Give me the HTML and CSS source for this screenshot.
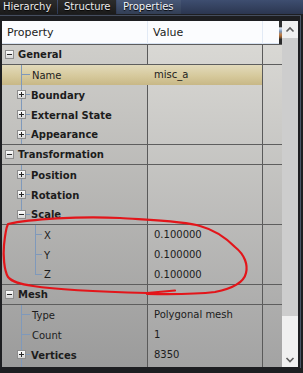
FILE: index.html
```html
<!DOCTYPE html>
<html>
<head>
    <meta charset="UTF-8">
    <title>Properties</title>
    <link rel="stylesheet" href="styles.css">
</head>
<body>
    <div class="tabs">
        <div class="tab t1">Hierarchy</div>
        <div class="tab t2">Structure</div>
        <div class="tab t3 active">Properties</div>
    </div>

    <div class="frame">
        <div class="grid">
            <div class="head">
                <div class="prop">Property</div>
                <div class="val">Value</div>
                <div class="rest"><span class="thumbimg"></span></div>
            </div>
            <div class="body">
                <div class="row line">
                    <div class="prop"><span class="tg"></span><b class="cat">General</b></div>
                    <div class="val"></div><div class="rest"></div>
                </div>
                <div class="row sel">
                    <div class="prop"><span class="br"></span><span class="leaf">Name</span></div>
                    <div class="val">misc_a</div><div class="rest"></div>
                </div>
                <div class="row">
                    <div class="prop"><span class="br"><span class="tg plus"></span></span><b>Boundary</b></div>
                    <div class="val"></div><div class="rest"></div>
                </div>
                <div class="row">
                    <div class="prop"><span class="br"><span class="tg plus"></span></span><b>External State</b></div>
                    <div class="val"></div><div class="rest"></div>
                </div>
                <div class="row line">
                    <div class="prop"><span class="br"><span class="tg plus"></span></span><b>Appearance</b></div>
                    <div class="val"></div><div class="rest"></div>
                </div>
                <div class="row line">
                    <div class="prop"><span class="tg"></span><b class="cat">Transformation</b></div>
                    <div class="val"></div><div class="rest"></div>
                </div>
                <div class="row">
                    <div class="prop"><span class="br"><span class="tg plus"></span></span><b>Position</b></div>
                    <div class="val"></div><div class="rest"></div>
                </div>
                <div class="row">
                    <div class="prop"><span class="br"><span class="tg plus"></span></span><b>Rotation</b></div>
                    <div class="val"></div><div class="rest"></div>
                </div>
                <div class="row line">
                    <div class="prop"><span class="br last"><span class="tg"></span></span><b>Scale</b></div>
                    <div class="val"></div><div class="rest"></div>
                </div>
                <div class="row">
                    <div class="prop"><span class="br l2"></span><span class="leaf">X</span></div>
                    <div class="val">0.100000</div><div class="rest"></div>
                </div>
                <div class="row">
                    <div class="prop"><span class="br l2"></span><span class="leaf">Y</span></div>
                    <div class="val">0.100000</div><div class="rest"></div>
                </div>
                <div class="row line">
                    <div class="prop"><span class="br l2 last"></span><span class="leaf">Z</span></div>
                    <div class="val">0.100000</div><div class="rest"></div>
                </div>
                <div class="row line">
                    <div class="prop"><span class="tg"></span><b class="cat">Mesh</b></div>
                    <div class="val"></div><div class="rest"></div>
                </div>
                <div class="row">
                    <div class="prop"><span class="br"></span><span class="leaf">Type</span></div>
                    <div class="val">Polygonal mesh</div><div class="rest"></div>
                </div>
                <div class="row">
                    <div class="prop"><span class="br"></span><span class="leaf">Count</span></div>
                    <div class="val">1</div><div class="rest"></div>
                </div>
                <div class="row">
                    <div class="prop"><span class="br"><span class="tg plus"></span></span><b>Vertices</b></div>
                    <div class="val">8350</div><div class="rest"></div>
                </div>
                <!-- next row is scrolled out of view, only its tree line shows -->
                <div class="row">
                    <div class="prop"><span class="br"></span></div>
                    <div class="val"></div><div class="rest"></div>
                </div>
            </div>
        </div>

        <div class="scroll">
            <div class="sbtn">
                <svg width="16" height="16" viewBox="0 0 16 16"><polyline points="4.5,10.5 8,7 11.5,10.5" fill="none" stroke="#5c5c5c" stroke-width="1.6"/></svg>
            </div>
            <div class="sthumb"></div>
            <div class="strack"></div>
            <div class="sbtn">
                <svg width="16" height="16" viewBox="0 0 16 16"><polyline points="4.5,7 8,10.5 11.5,7" fill="none" stroke="#5c5c5c" stroke-width="1.6"/></svg>
            </div>
        </div>
    </div>

    <!-- red pen mark drawn over the panel -->
    <svg class="mark" width="303" height="373" viewBox="0 0 303 373">
        <path d="M175 290.5 L147 293 C110 292 60 290 33 286 C20 284 12 282 8 277 C4 270 3 255 4 245 C5 235 6 228 8 224 C30 219 80 216 120 218 C150 220 185 221 200 226 C215 230 225 237 235 247 C245 255 248 265 246 273 C244 282 235 288 215 292 C190 295 165 294 147 294" fill="none" stroke="#e3151a" stroke-width="2.2" stroke-linecap="round" stroke-linejoin="round"/>
    </svg>
</body>
</html>
```

FILE: styles.css
```css
body {
    margin: 0;
    width: 303px;
    height: 373px;
    overflow: hidden;
    position: relative;
    background: #1d1e21;
    font-family: "DejaVu Sans", Verdana, sans-serif;
    font-size: 10px;
    color: #1c1c1c;
}
.tabs {
    display: flex;
    height: 14px;
    background: linear-gradient(#3e4e70, #2b3650);
}
.tab {
    box-sizing: border-box;
    height: 14px;
    line-height: 14px;
    color: #ececec;
    text-shadow: 0 1px 1px #000;
    background: linear-gradient(#2c2c2c, #1b1b1b);
    margin-right: 1px;
}
.t1 {
    width: 57px;
    padding-left: 3px;
}
.t2 {
    width: 58px;
    padding-left: 6px;
}
.t3 {
    width: 64px;
    padding-left: 6px;
}
.tab.active {
    background: linear-gradient(#485877, #323e55);
    color: #f2f4f8;
}
.frame {
    display: flex;
    width: 301px;
    box-sizing: border-box;
    margin-top: 1px;
    padding: 5px 2px 0 2px;
    border-top: 1px solid #444d5e;
    border-right: 1px solid #4a5466;
    height: 353px;
}
.grid {
    width: 280px;
    height: 346px;
    overflow: hidden;
    background: #c8c8c8;
}
.head {
    display: grid;
    grid-template-columns: 146px 115px 19px;
    height: 24px;
    box-sizing: border-box;
    background: #fbfcfe;
    border-bottom: 1px solid #5c5c5c;
    box-shadow: inset 0 -1px 0 #d8e3f2;
    font-size: 11px;
    line-height: 23px;
}
.head .prop {
    padding-left: 5px;
    border-right: 1px solid #e2eaf5;
}
.head .val {
    padding-left: 5px;
    border-right: 1px solid #e2eaf5;
}
.head .rest {
    display: flex;
    justify-content: flex-end;
}
.thumbimg {
    width: 3px;
    height: 23px;
    background: linear-gradient(#2e2e2e 0, #2e2e2e 25%, #dfe6ee 30%, #7b96b8 45%, #c07a40 60%, #8a5a30 70%, #2a2a2a 80%);
}
.body {
    height: 322px;
    background: linear-gradient(#d9d8d4, #a3a3a3);
}
.row {
    display: grid;
    grid-template-columns: 146px 115px 19px;
    height: 20px;
    box-sizing: border-box;
    line-height: 19px;
}
.row.line {
    border-bottom: 1px solid #5e5e5e;
}
.prop {
    box-sizing: border-box;
    display: flex;
    align-items: center;
    border-right: 1px solid #5a5a5a;
    white-space: nowrap;
}
.body .prop {
    background: rgba(0, 0, 0, 0.045);
}
.val {
    box-sizing: border-box;
    padding-left: 6px;
    border-right: 1px solid #5a5a5a;
    white-space: nowrap;
}
.row.sel .prop,
.row.sel .val {
    background: linear-gradient(#e2dabb, #d6c99c 55%, #c8b886);
}
.row.sel .prop {
    border-right-color: transparent;
}
.tg {
    position: relative;
    width: 9px;
    height: 9px;
    box-sizing: border-box;
    border: 1px solid #8d8d8d;
    background: linear-gradient(#ffffff, #d6d6d6);
    margin-left: 3px;
    flex: none;
}
.tg::before {
    content: '';
    position: absolute;
    left: 1px;
    top: 3px;
    width: 5px;
    height: 1px;
    background: #262626;
}
.tg.plus::after {
    content: '';
    position: absolute;
    left: 3px;
    top: 1px;
    width: 1px;
    height: 5px;
    background: #262626;
}
.cat {
    margin-left: 4px;
}
.br {
    position: relative;
    width: 29px;
    align-self: stretch;
    flex: none;
}
.br::before {
    content: '';
    position: absolute;
    left: 19px;
    top: 0;
    bottom: 0;
    width: 1px;
    background: #7f99bb;
}
.br.last::before {
    bottom: 50%;
}
.br::after {
    content: '';
    position: absolute;
    left: 19px;
    top: 9px;
    width: 9px;
    height: 1px;
    background: #7f99bb;
}
.br .tg {
    position: absolute;
    left: 15px;
    top: 5px;
    margin: 0;
    z-index: 1;
}
.br.l2 {
    width: 41px;
}
.br.l2::before,
.br.l2::after {
    left: 33px;
}
.br.l2::after {
    width: 7px;
}
.leaf {
    margin-left: 1px;
}
.scroll {
    width: 16px;
    height: 346px;
    display: flex;
    flex-direction: column;
    background: #f0f0f0;
}
.sbtn {
    height: 16px;
    flex: none;
}
.sbtn svg {
    display: block;
}
.sthumb {
    height: 278px;
    margin-top: 1px;
    background: #cdcdcd;
}
.strack {
    flex: 1;
}
.mark {
    position: absolute;
    left: 0;
    top: 0;
    pointer-events: none;
}
```
